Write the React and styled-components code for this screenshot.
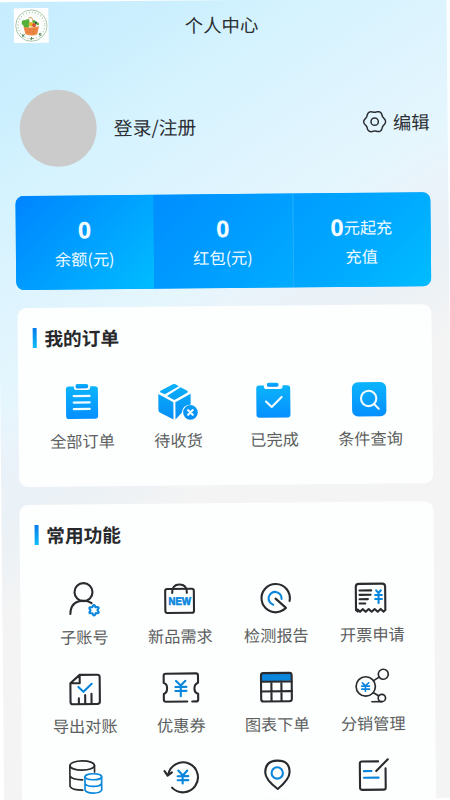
import React from "react";
import styled, { createGlobalStyle } from "styled-components";

const Global = createGlobalStyle`
  * { box-sizing: border-box; }
  html, body { margin: 0; background: #fff; overflow: hidden; }
  body { font-family: "Noto Sans CJK SC", sans-serif; color: #2b2f33; }
`;

const Viewport = styled.div`
  width: 450px;
  height: 800px;
  overflow: hidden;
  background: #fff;
`;

const Screen = styled.main`
  width: 449.5px;
  height: 800px;
  overflow: hidden;
  display: flex;
  flex-direction: column;
  transform-origin: 0 0;
  transform: translate(-3.5px, 2.3px) rotate(-0.55deg);
  background: linear-gradient(
    148deg,
    #c6ecff 0,
    #cbeffe 90px,
    #d5f3fe 170px,
    #dff4fe 270px,
    #e5f6fd 340px,
    #eaf3fa 385px,
    #ebf1f5 460px,
    #f4f4f4 525px
  );
`;

const Header = styled.header`
  display: grid;
  grid-template-columns: 36px 1fr 36px;
  align-items: center;
  height: 47px;
  padding: 0 16.8px;
  flex: none;
`;

const Logo = styled.svg`
  width: 35px;
  height: 35px;
  display: block;
`;

const Title = styled.h1`
  margin: 0;
  text-align: center;
  font-size: 18.4px;
  font-weight: 400;
  line-height: 24px;
`;

const Profile = styled.section`
  display: flex;
  align-items: center;
  height: 77px;
  margin: 41px 17.6px 28.9px 22px;
  flex: none;
`;

const Avatar = styled.div`
  width: 76.5px;
  height: 76.5px;
  border-radius: 50%;
  background: #cbcbcb;
`;

const Login = styled.span`
  margin: -2px 0 0 17.6px;
  font-size: 18.8px;
  line-height: 26px;
`;

const Edit = styled.span`
  display: flex;
  align-items: center;
  gap: 6px;
  margin: -8px 0 0 auto;
  font-size: 18.3px;
  line-height: 26px;
`;

const Gear = styled.svg`
  width: 24px;
  height: 24px;
`;

const Wallet = styled.section`
  display: grid;
  grid-template-columns: repeat(3, 1fr);
  height: 94.6px;
  margin: 0 17.7px 17.9px 17.2px;
  border-radius: 8px;
  overflow: hidden;
  flex: none;
  color: #f2fbff;
  background: #009dff;
`;

const tones = {
  first: "linear-gradient(135deg, #0084ff 0%, #00a0ff 50%, #00bdff 100%)",
  second: "linear-gradient(135deg, #008eff 0%, #009cff 50%, #00acff 100%)",
  third: "linear-gradient(135deg, #009cff 0%, #00a9ff 50%, #00bdff 100%)",
};

const WalletCell = styled.div`
  display: flex;
  flex-direction: column;
  align-items: center;
  padding: 20px 1px 0 0;
  background: ${(p) => tones[p.$tone]};
  border-left: ${(p) => (p.$tone === "third" ? "1px solid #22b2ff" : "0")};
`;

const Amount = styled.div`
  display: flex;
  align-items: center;
  height: 28px;
  font-size: 16.2px;
`;

const Digit = styled.b`
  font: 700 23px/28px "Noto Sans", sans-serif;
`;

const WalletLabel = styled.div`
  margin-top: 3.5px;
  font-size: 16.2px;
  line-height: 24px;
`;

const Card = styled.section`
  height: ${(p) => p.$height}px;
  margin: 0 17.5px 17.8px 17.6px;
  padding: 20px 15px 0;
  background: #fdfefe;
  border-radius: 9px;
  flex: none;
`;

const Heading = styled.h2`
  display: flex;
  align-items: center;
  gap: 8px;
  height: 20px;
  margin: 0 0 37px;
  font-size: 18.7px;
  font-weight: 700;
  line-height: 20px;
  color: #26282b;

  &::before {
    content: "";
    width: 4px;
    height: 20px;
    background: linear-gradient(#087be8, #0bbcf8);
  }
`;

const Tiles = styled.div`
  display: grid;
  grid-template-columns: repeat(4, 96px);
  row-gap: 20.5px;
`;

const Tile = styled.div`
  display: flex;
  flex-direction: column;
  align-items: center;
  gap: 7.2px;
  height: 68.5px;
`;

const TileLabel = styled.span`
  padding-left: 2.4px;
  font-size: 16.2px;
  line-height: 24px;
  color: #5c5e60;
  white-space: nowrap;
`;

const Glyph = styled.svg`
  width: 36px;
  height: 36px;
  overflow: visible;
  fill: none;
  stroke: #292b2e;
  stroke-width: 6.3;
  stroke-linecap: round;
  stroke-linejoin: round;

  .blue { stroke: #0a86dc; }
  .solid { fill: url(#${(p) => p.$fill || "skyDown"}); stroke: none; }
  .pale { stroke: #f0fbff; }
  .dot { fill: #f0fbff; stroke: none; }
  .fillBlue { fill: #0a86dc; stroke: none; }
`;

const NewMark = styled.text`
  font: 700 33px "Liberation Sans", sans-serif;
  fill: #0a86dc;
  stroke: #0a86dc;
  stroke-width: 2px;
`;

const Defs = styled.svg`
  width: 0;
  height: 0;
  display: block;
`;

const Gradients = () => (
  <Defs>
    <defs>
      <linearGradient id="skyDown" x1="0" y1="0" x2="0" y2="1">
        <stop offset="0" stopColor="#0bb4fb" />
        <stop offset="1" stopColor="#058fff" />
      </linearGradient>
      <linearGradient id="skyBox" gradientUnits="userSpaceOnUse" x1="0" y1="71" x2="0" y2="180">
        <stop offset="0" stopColor="#0ab1f8" />
        <stop offset="1" stopColor="#058df7" />
      </linearGradient>
    </defs>
  </Defs>
);

// Closed six-lobed outline; `phase` turns the lobes.
const lobes = (cx, cy, radius, depth, phase = 0) => {
  const points = [];
  for (let i = 0; i < 72; i += 1) {
    const a = (i * Math.PI) / 36;
    const r = radius + depth * Math.cos(6 * (a - phase));
    points.push(`${(cx + r * Math.cos(a)).toFixed(2)} ${(cy + r * Math.sin(a)).toFixed(2)}`);
  }
  return `M${points.join("L")}Z`;
};

const icons = {
  orders: {
    box: "102 73.5 108 108",
    art: (
      <>
        <path className="solid" d="M119 79h15v4q0 7 7 7h35q7 0 7-7v-4h14q9 0 9 9v80q0 9-9 9h-78q-9 0-9-9V88q0-9 9-9z" />
        <rect className="solid" x="139" y="72" width="38" height="13" rx="5" />
        <path className="pale" d="M133 108h48M133 127.500h48M133 147h48" />
      </>
    ),
  },
  parcel: {
    box: "390 71 108 108",
    fill: "skyBox",
    art: (
      <>
        <path className="solid" d="M431 73q4-2 8 0l10 6-42 24-13-6q-4-3 0-5zM454 82l20 11q4 3 0 6l-39 21-22-12zM387 102l45 25v52l-41-22q-4-2-4-7zM438 127l46-25v32q-25 1-27 25l-19 20z" />
        <circle className="solid" cx="483" cy="158" r="22" />
        <path className="pale" d="M476 151l14 14M490 151l-14 14" />
      </>
    ),
  },
  done: {
    box: "78 68 108 108",
    art: (
      <>
        <path className="solid" d="M90 76h14v3q0 8 8 8h40q8 0 8-8v-3h14q9 0 9 9v79q0 9-9 9H90q-9 0-9-9V85q0-9 9-9z" />
        <rect className="solid" x="113" y="68" width="35" height="12" rx="5" />
        <path className="pale" d="M110 124l17 17 30-30" />
      </>
    ),
  },
  search: {
    box: "366 65 108 108",
    art: (
      <>
        <rect className="solid" x="368" y="66" width="103" height="103" rx="18" />
        <circle className="pale" cx="418" cy="115" r="23" />
        <path className="pale" d="M434 132l14 14" />
      </>
    ),
  },
  account: {
    box: "138 213 108 108",
    art: (
      <>
        <circle cx="193" cy="245" r="27" />
        <path d="M153 310q1-37 35-39 17-1 29 7" />
        <path className="blue" d={lobes(224, 299.5, 13, 2.6, Math.PI / 6)} />
      </>
    ),
  },
  bag: {
    box: "426 210 108 108",
    art: (
      <>
        <rect x="438" y="235" width="86" height="72" rx="6" />
        <path d="M459 247q0-25 22-25t22 25" />
        <NewMark x="448" y="283" textLength="67" lengthAdjust="spacingAndGlyphs">NEW</NewMark>
      </>
    ),
  },
  report: {
    box: "69 208 108 108",
    art: (
      <>
        <path d="M166 272a42.500 42.500 0 1 0-29 32q9-3 18-11l-31-28" />
        <path className="blue" d="M117 283a19.500 19.500 0 1 1 25-17" />
      </>
    ),
  },
  invoice: {
    box: "357 205 108 108",
    art: (
      <>
        <path d="M370 303l-5-4v-70q0-9 9-9h70q9 0 9 9v70l-6 5-8-8-9 8-9-8-9 8-9-8-9 8-9-8-8 8-7-7" />
        <path d="M376 240h35M376 253h33M376 266h25M376 279h17" />
        <path className="blue" d="M426 240l7 8 7-8M433 248v30M423 254h20M423 266h20" />
      </>
    ),
  },
  ledger: {
    box: "140 45 108 108",
    art: (
      <>
        <path d="M181 58h53q7 0 7 7v73q0 8-8 8h-73q-7 0-7-7V83zM181 58v25h-28M178 128v17M197 119v26M216 115v30" />
        <path className="blue" d="M177 94l15 15 25-24" />
      </>
    ),
  },
  coupon: {
    box: "428 42 108 108",
    art: (
      <>
        <path d="M503 138H439q-6 0-6-6v-17q10-3 10-17t-10-16V60q0-6 6-6h91q6 0 6 6v22q-11 4-11 17t11 16v17q0 6-6 6h-12" />
        <path className="blue" d="M470 76l14 14 14-14M484 90v32M468 94h33M468 106h33" />
      </>
    ),
  },
  table: {
    box: "71 40 108 108",
    art: (
      <>
        <path className="fillBlue" d="M80 53h91v24H80z" />
        <rect x="80" y="53" width="92" height="85" rx="7" />
        <path d="M80 79h92M80 108h92M111 79v58M141 79v58" />
      </>
    ),
  },
  share: {
    box: "359 37 108 108",
    art: (
      <>
        <circle strokeWidth="5" cx="394" cy="93" r="29" />
        <circle strokeWidth="5" cx="447" cy="57" r="15" />
        <circle strokeWidth="5" cx="442" cy="128" r="11" />
        <path strokeWidth="5" d="M419 75l14-9M417 112l15 9M412 139h29" />
        <path className="blue" strokeWidth="5" d="M384 82l9 9 10-9M393 91v16M382 92h23M382 101h23" />
      </>
    ),
  },
  coins: {
    box: "143 312 108 108",
    art: (
      <>
        <ellipse strokeWidth="5" cx="189" cy="330" rx="37" ry="14" />
        <path strokeWidth="5" d="M152 330v62q5 11 38 12M226 330v20M152 361q6 12 38 12" />
        <g className="blue" strokeWidth="5">
          <ellipse cx="222" cy="364" rx="25" ry="9" />
          <path d="M197 364v40q4 9 25 9t25-9v-40M197 384q4 9 25 9t25-9" />
        </g>
      </>
    ),
  },
  refund: {
    box: "431 309 108 108",
    art: (
      <>
        <path d="M458 396a45 45 0 1 0-11-40M436 346l9 14 13-10" />
        <path className="blue" d="M477 345l14 15 13-15M490 360v24M475 362h32M475 374h32" />
      </>
    ),
  },
  place: {
    box: "74 307 108 108",
    art: (
      <>
        <path d="M130 401q-37-29-37-50 0-35 37-35t36 35q0 21-36 50z" />
        <circle className="blue" cx="129" cy="353" r="17" />
      </>
    ),
  },
  note: {
    box: "362 304 108 108",
    art: (
      <>
        <path d="M432 318h-49q-6 0-6 6v73q0 6 6 6h65q6 0 6-6v-58M426 347l35-35" />
        <path className="blue" d="M389 347h23M389 367h44" />
      </>
    ),
  },
};

const orderItems = [
  ["orders", "全部订单"],
  ["parcel", "待收货"],
  ["done", "已完成"],
  ["search", "条件查询"],
];

const toolItems = [
  ["account", "子账号"],
  ["bag", "新品需求"],
  ["report", "检测报告"],
  ["invoice", "开票申请"],
  ["ledger", "导出对账"],
  ["coupon", "优惠券"],
  ["table", "图表下单"],
  ["share", "分销管理"],
  ["coins", ""],
  ["refund", ""],
  ["place", ""],
  ["note", ""],
];

const TileGrid = ({ items }) => (
  <Tiles>
    {items.map(([name, label]) => (
      <Tile key={name}>
        <Glyph viewBox={icons[name].box} $fill={icons[name].fill}>
          {icons[name].art}
        </Glyph>
        {label && <TileLabel>{label}</TileLabel>}
      </Tile>
    ))}
  </Tiles>
);

const BasketLogo = () => (
  <Logo viewBox="0 0 105 105">
    <rect width="105" height="105" fill="#fff" />
    <circle cx="53" cy="53" r="47" fill="none" stroke="#7fab83" strokeWidth="2" />
    <circle cx="53" cy="53" r="40" fill="none" stroke="#a9c4ab" strokeWidth="4" strokeDasharray="3 6" />
    <circle cx="53" cy="53" r="33" fill="#fff" stroke="#cfe0d0" strokeWidth="1" />
    <path d="M43 52Q43 28 50 28t11 24" fill="none" stroke="#d1a66a" strokeWidth="3" />
    <g fill="#55b03a">
      <circle cx="32" cy="44" r="8" />
      <circle cx="41" cy="41" r="7" />
      <circle cx="38" cy="51" r="9" />
      <circle cx="61" cy="41" r="5" />
    </g>
    <circle cx="52" cy="49" r="7" fill="#e7b52d" />
    <circle cx="61" cy="52" r="6" fill="#d75231" />
    <circle cx="67" cy="45" r="4" fill="#345246" />
    <circle cx="72" cy="48" r="4" fill="#68ad3d" />
    <path d="M29 56q22 6 47-1l-6 24q-17 7-35 0z" fill="#ee8a45" />
    <path d="M34 64h38M37 72h32M46 59l2 20M59 59l-1 20" stroke="#d9763a" strokeWidth="1.5" />
    <path d="M24 79l7 7M32 79l-7 7M48 92h11M53 87v10M75 82l7-6M76 76l6 8" stroke="#5e9163" strokeWidth="3" />
  </Logo>
);

const Amounts = [
  ["first", "", "余额(元)"],
  ["second", "", "红包(元)"],
  ["third", "元起充", "充值"],
];

export default function App() {
  return (
    <Viewport>
      <Global />
      <Gradients />
      <Screen>
        <Header>
          <BasketLogo />
          <Title>个人中心</Title>
        </Header>
        <Profile>
          <Avatar />
          <Login>登录/注册</Login>
          <Edit>
            <Gear viewBox="413 328 72 72" fill="none" stroke="#2b2f33" strokeWidth="4.5" strokeLinejoin="round">
              <path d={lobes(449, 364, 30.5, 2.4)} />
              <circle cx="449" cy="364" r="11" />
            </Gear>
            编辑
          </Edit>
        </Profile>
        <Wallet>
          {Amounts.map(([tone, suffix, label]) => (
            <WalletCell key={tone} $tone={tone}>
              <Amount>
                <Digit>0</Digit>
                {suffix}
              </Amount>
              <WalletLabel>{label}</WalletLabel>
            </WalletCell>
          ))}
        </Wallet>
        <Card $height={178.6}>
          <Heading>我的订单</Heading>
          <TileGrid items={orderItems} />
        </Card>
        <Card $height={340}>
          <Heading>常用功能</Heading>
          <TileGrid items={toolItems} />
        </Card>
      </Screen>
    </Viewport>
  );
}
